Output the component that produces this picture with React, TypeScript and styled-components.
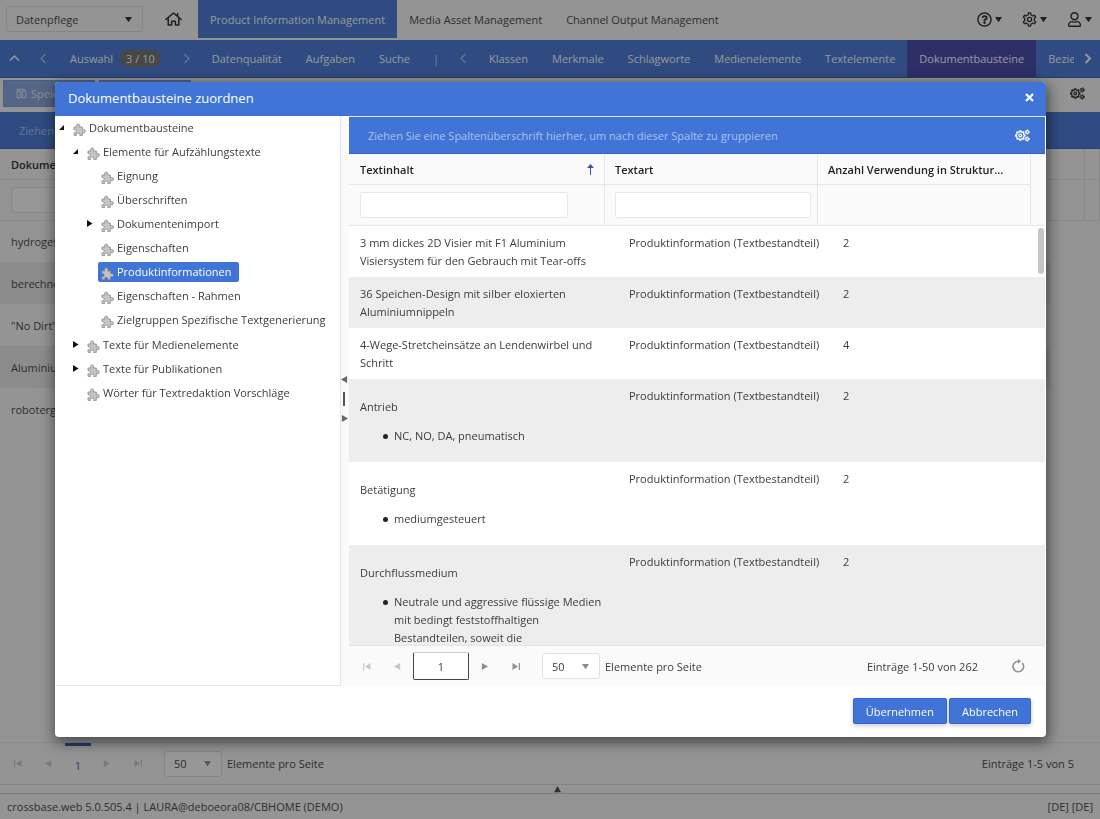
import React from "react";
import styled, { createGlobalStyle, css } from "styled-components";
import { FaRegUser, FaRegQuestionCircle, FaRegSave } from "react-icons/fa";

const blue = "#4074d6";
const line = "#e6e6e6";

const GlobalStyle = createGlobalStyle`
  * { box-sizing: border-box; }
  body { margin: 0; background: #fafafa; }
  body, button, input, select { font-family: "Open Sans", "Noto Sans", sans-serif; font-size: 11px; color: #3c3c3c; }
  button { border: 0; padding: 0; background: none; cursor: pointer; }
  a { color: inherit; text-decoration: none; }
  ul { list-style: none; margin: 0; padding: 0; }
  svg { flex: none; }
`;

/* ---------- icons ---------- */

const gearPath = (cx: number, cy: number, inner: number, outer: number, teeth: number) => {
  const step = (Math.PI * 2) / teeth;
  const at = (angle: number, radius: number) =>
    `${(cx + Math.cos(angle) * radius).toFixed(2)} ${(cy + Math.sin(angle) * radius).toFixed(2)}`;
  const points: string[] = [];
  for (let i = 0; i < teeth; i++) {
    const a = i * step - Math.PI / 2;
    points.push(at(a - step * 0.25, inner), at(a - step * 0.17, outer), at(a + step * 0.17, outer), at(a + step * 0.25, inner));
  }
  return `M${points.join("L")}Z`;
};

const GearIcon = () => (
  <svg width="15" height="15" viewBox="0 0 16 16" fill="none" stroke="currentColor" strokeWidth="1.4" strokeLinejoin="round">
    <path d={gearPath(8, 8, 5.3, 7.1, 6)} />
    <circle cx="8" cy="8" r="2.2" />
  </svg>
);

const GearsIcon = () => (
  <svg width="15" height="13" viewBox="0 0 15 13" fill="none" stroke="currentColor" strokeWidth="1.2" strokeLinejoin="round">
    <path d={gearPath(5.3, 6.5, 3.7, 4.7, 8)} />
    <circle cx="5.3" cy="6.5" r="1.4" />
    <circle cx="12.2" cy="3" r="1.4" />
    <circle cx="12.2" cy="10" r="1.4" />
    <circle cx="12.2" cy="3" r="2.3" strokeWidth="0.8" strokeDasharray="1.2 1.2" />
    <circle cx="12.2" cy="10" r="2.3" strokeWidth="0.8" strokeDasharray="1.2 1.2" />
  </svg>
);

const HomeIcon = () => (
  <svg width="17" height="14" viewBox="0 0 17 14" fill="none" stroke="currentColor" strokeWidth="1.5" strokeLinejoin="round" strokeLinecap="round">
    <path d="M1 7.4 8.5 1 16 7.4M12.6 4.2V1.6" />
    <path d="M3.2 6.6V13h3.4V9.2h3.8V13h3.4V6.6" />
  </svg>
);

const PuzzleIcon = () => (
  <svg width="13" height="13" viewBox="0 0 13 13" fill="#c4c4c4" stroke="#8e8e8e" strokeWidth="0.8" strokeLinejoin="round">
    <path d="M1 4h3C3.300 3.200 3.300 1 5.200 1s1.900 2.200 1.200 3H9.400v3c.7-.7 3-.7 3 1.200s-2.300 1.800-3 1.100V12.400H6.700c.5-1.200.1-2.200-1.500-2.200s-2 1-1.500 2.200H1V9.700c1.200.4 2.100 0 2.100-1.500S2.200 6.300 1 6.800z" />
  </svg>
);

type Direction = "up" | "down" | "left" | "right";

const triangles: Record<Direction, string> = {
  up: "0,7 8,7 4,0",
  down: "0,1 8,1 4,7",
  left: "7,0 7,8 0,4",
  right: "1,0 1,8 8,4",
};

const Triangle = ({ to, size = 7 }: { to: Direction; size?: number }) => (
  <svg width={size} height={size} viewBox="0 0 8 8" fill="currentColor">
    <polygon points={triangles[to]} />
  </svg>
);

const EndTriangle = ({ to }: { to: "left" | "right" }) => (
  <svg width="8" height="7" viewBox="0 0 8 7" fill="currentColor">
    {to === "left" ? <path d="M0 0h1.2v7H0zM7.5 0v7L2 3.500z" /> : <path d="M6.800 0H8v7H6.800zM.5 0v7L6 3.500z" />}
  </svg>
);

const chevrons: Record<string, string> = {
  up: "M1 7.500 5.500 3l4.500 4.500",
  left: "M7.500 1 3 5.500 7.500 10",
  right: "M3.500 1 8 5.500 3.500 10",
};

const Chevron = ({ to, weight = 1.5 }: { to: "up" | "left" | "right"; weight?: number }) => (
  <svg width="11" height="11" viewBox="0 0 11 11" fill="none" stroke="currentColor" strokeWidth={weight}>
    <path d={chevrons[to]} />
  </svg>
);

const ExpandedMark = () => (
  <svg width="6" height="6" viewBox="0 0 6 6" fill="#111">
    <polygon points="5,0 5,5 0,5" />
  </svg>
);

const CollapsedMark = () => (
  <svg width="6" height="8" viewBox="0 0 6 8" fill="#111">
    <polygon points="0,0 0,7 5.500,3.500" />
  </svg>
);

/* ---------- application page ---------- */

const Page = styled.div`
  display: flex;
  flex-direction: column;
  min-height: 100vh;
  background: #fafafa;
`;

const TopBar = styled.header`
  display: flex;
  align-items: center;
  height: 40px;
  padding: 0 8px 2px 6px;
`;

const SelectBox = styled.span<{ $width: number }>`
  display: inline-flex;
  align-items: center;
  position: relative;
  width: ${(p) => p.$width}px;
  height: 26px;
  border: 1px solid #e0e0e0;
  border-radius: 3px;
  background: ${(p) => (p.$width > 100 ? "#fafafa" : "#fff")};
  color: ${(p) => (p.$width > 100 ? "#222" : "#8a8a8a")};
  svg {
    position: absolute;
    right: 10px;
    pointer-events: none;
  }
`;

const Select = styled.select`
  appearance: none;
  width: 100%;
  height: 100%;
  border: 0;
  padding: 0 20px 0 9px;
  background: transparent;
`;

const HomeLink = styled.a`
  display: flex;
  margin: 0 16px 0 22px;
  color: #222;
`;

const ModuleTabs = styled.nav`
  display: flex;
  align-self: flex-start;
  flex: 1;
  min-width: 0;
`;

const ModuleTab = styled.a<{ $active?: boolean }>`
  display: flex;
  align-items: center;
  height: 38px;
  padding: 0 12px;
  white-space: nowrap;
  ${(p) => p.$active && css`background: ${blue}; color: #fff;`}
`;

const UserTools = styled.div`
  display: flex;
  gap: 20px;
`;

const ToolButton = styled.button`
  display: flex;
  align-items: center;
  gap: 3px;
  color: #222;
`;

const SectionBar = styled.nav`
  display: flex;
  align-items: stretch;
  height: 38px;
  background: ${blue};
  color: #fff;
  border-bottom: 1px solid #3058a8;
`;

const ArrowButton = styled.button<{ $dim?: boolean; $width: number }>`
  display: flex;
  flex: none;
  align-items: center;
  justify-content: center;
  width: ${(p) => p.$width}px;
  color: ${(p) => (p.$dim ? "#9bb6ea" : "#fff")};
`;

const SectionTabs = styled.div`
  display: flex;
  flex: 1;
  min-width: 0;
  overflow: hidden;
`;

const SectionTab = styled.a<{ $active?: boolean }>`
  display: flex;
  flex: none;
  align-items: center;
  gap: 7px;
  padding: 0 12px;
  background: ${(p) => (p.$active ? "#3f3fa8" : "transparent")};
`;

const Badge = styled.span`
  padding: 0 6px;
  border-radius: 9px;
  background: #6b6b6b;
  line-height: 17px;
`;

const Divider = styled.span`
  align-self: center;
  padding: 0 12px 0 11px;
  color: #b9e4e8;
`;

const ActionBar = styled.div`
  display: flex;
  align-items: center;
  gap: 4px;
  height: 34px;
  padding: 0 15px 4px 3px;
`;

const DisabledButton = styled.button`
  display: flex;
  align-items: center;
  gap: 4px;
  width: 92px;
  height: 27px;
  padding: 0 12px;
  border: 1px solid #7596da;
  background: #84a3e0;
  color: #e8eefb;
  cursor: default;
`;

const Spacer = styled.span`
  flex: 1;
`;

const GroupBar = styled.div<{ $inset: number }>`
  display: flex;
  align-items: center;
  justify-content: space-between;
  flex: none;
  height: 37px;
  padding: 0 15px 0 ${(p) => p.$inset}px;
  background: ${blue};
  border-bottom: 1px solid #2f62c6;
  color: #a9c2f0;
  button { color: #fff; }
`;

const PageGrid = styled.table`
  width: 100%;
  border-collapse: collapse;
  table-layout: fixed;
  th { height: 30px; padding: 2px 11px 0; text-align: left; font-weight: 600; color: #222; border-bottom: 1px solid ${line}; border-right: 1px solid ${line}; }
  thead tr:last-child th { height: 41px; padding-top: 0; }
  td { height: 42px; padding: 0 11px; white-space: nowrap; overflow: hidden; }
  tbody tr:nth-child(even) td:first-child { background: #ebebeb; }
  col:last-child { width: 15px; }
  col:nth-child(2) { width: 35px; }
`;

const TextInput = styled.input`
  display: block;
  width: 100%;
  height: 26px;
  padding: 0 8px;
  border: 1px solid #e8e8e8;
  border-radius: 2px;
  background: #fff;
`;

const PageBody = styled.main`
  flex: 1;
`;

const Pager = styled.div<{ $height: number }>`
  display: flex;
  flex: none;
  align-items: center;
  height: ${(p) => p.$height}px;
  padding-left: 2px;
  border-top: 1px solid ${line};
  background: #fafafa;
`;

const PagerButton = styled.button<{ $dim?: boolean }>`
  display: flex;
  align-items: center;
  justify-content: center;
  width: 31px;
  height: 26px;
  color: ${(p) => (p.$dim ? "#c8c8c8" : "#8f8f8f")};
`;

const CurrentPage = styled.button`
  align-self: stretch;
  width: 26px;
  margin: 0 0 0 1px;
  border-top: 3px solid #3f51b5;
  color: #3f51b5;
`;

const PagerLabel = styled.label`
  display: flex;
  align-items: center;
  gap: 5px;
  margin-left: 11px;
`;

const PagerInfo = styled.span<{ $right: number }>`
  margin-left: auto;
  padding-right: ${(p) => p.$right}px;
`;

const BottomSplitter = styled.div`
  display: flex;
  align-items: center;
  justify-content: center;
  height: 10px;
  padding-left: 14px;
  border-top: 1px solid #ddd;
  border-bottom: 1px solid #d0d0d0;
  color: #444;
`;

const StatusBar = styled.footer`
  display: flex;
  align-items: center;
  justify-content: space-between;
  height: 25px;
  padding: 0 7px;
`;

/* ---------- dialog ---------- */

const Overlay = styled.div`
  position: fixed;
  inset: 0;
  display: flex;
  padding: 82px 54px 82px 55px;
  background: rgba(28, 28, 28, 0.46);
`;

const Dialog = styled.section`
  display: flex;
  flex: 1;
  flex-direction: column;
  min-width: 0;
  overflow: hidden;
  border-radius: 4px;
  background: #fff;
  box-shadow: 1px 4px 14px 2px rgba(0, 0, 0, 0.5);
`;

const DialogTitle = styled.header`
  display: flex;
  flex: none;
  align-items: center;
  justify-content: space-between;
  height: 34px;
  padding: 0 12px 3px 13px;
  background: ${blue};
  color: #fff;
  h1 { margin: 0; font-size: 13px; font-weight: 400; }
  button { display: flex; color: #fff; }
`;

const DialogBody = styled.div`
  display: flex;
  flex: 1;
  min-height: 0;
  padding: 0 1px;
`;

const TreePane = styled.div`
  flex: none;
  width: 285px;
  border-right: 1px solid ${line};
  border-bottom: 1px solid ${line};
  overflow: hidden;
`;

const TreeGroup = styled.ul`
  && > li > ul > li > ul { padding: 0 0 1px; }
`;

const TreeRow = styled.div<{ $level: number }>`
  display: flex;
  align-items: center;
  height: 24px;
  padding-left: ${(p) => p.$level * 14 + 3}px;
`;

const TreeMark = styled.span`
  display: flex;
  flex: none;
  width: 11px;
  padding-bottom: 1px;
`;

const TreeLabel = styled.button<{ $selected?: boolean }>`
  display: flex;
  align-items: center;
  gap: 3px;
  height: 20px;
  padding: 0 7px 1px 3px;
  border-radius: 2px;
  white-space: nowrap;
  color: ${(p) => (p.$selected ? "#fff" : "#3c3c3c")};
  background: ${(p) => (p.$selected ? blue : "transparent")};
  svg { margin-top: 3px; }
`;

const PaneSplitter = styled.div`
  display: flex;
  flex: none;
  flex-direction: column;
  align-items: center;
  justify-content: center;
  gap: 9px;
  width: 8px;
  padding: 0 2px 4px 0;
  background: #fafafa;
  color: #666;
`;

const SplitterGrip = styled.span`
  width: 2px;
  height: 14px;
  background: #555;
`;

const GridPane = styled.div`
  display: flex;
  flex: 1;
  flex-direction: column;
  min-width: 0;
  border-top: 1px solid #dfe8f8;
`;

const HeadTable = styled.table`
  flex: none;
  width: 100%;
  border-collapse: separate;
  border-spacing: 0;
  table-layout: fixed;
  background: #fafafa;
  col:nth-child(2), col:nth-child(3) { width: 213px; }
  col:last-child { width: 14px; }
  th, td { padding: 0 6px 0 10px; text-align: left; border-bottom: 1px solid ${line}; border-right: 1px solid ${line}; }
  th { height: 31px; padding-top: 1px; font-weight: 600; color: #222; white-space: nowrap; }
  th:first-child, td:first-child { padding-left: 11px; }
  td { height: 41px; }
  tr > :last-child { border-right: 0; padding: 0; }
  thead tr > :last-child { border-bottom: 0; }
`;

const SortHead = styled.span`
  display: flex;
  align-items: center;
  justify-content: space-between;
  padding-right: 4px;
`;

const FilterCell = styled.div<{ $end: number }>`
  padding-right: ${(p) => p.$end}px;
`;

const GridBody = styled.div`
  position: relative;
  flex: 1;
  min-height: 0;
  overflow: hidden;
`;

const ScrollThumb = styled.span`
  position: absolute;
  top: 2px;
  right: 1px;
  width: 6px;
  height: 46px;
  border-radius: 3px;
  background: #c6c6c6;
`;

const BodyTable = styled.table`
  width: 100%;
  border-collapse: separate;
  border-spacing: 0;
  table-layout: fixed;
  line-height: 18px;
  col:nth-child(2), col:nth-child(3) { width: 214px; }
  td { padding: 8px 12px 7px; vertical-align: top; }
  td:first-child { padding-left: 11px; }
  td:nth-child(2) { white-space: nowrap; }
  tr:nth-child(even) { background: #ededed; }
  p { margin: 11px 0; }
  ul { margin: 11px 0 10px; padding-left: 23px; }
  li { display: flex; gap: 6px; }
  li::before { content: ""; flex: none; width: 5px; height: 5px; margin-top: 7px; border-radius: 50%; background: #222; }
`;

const PageInput = styled.input`
  width: 56px;
  height: 28px;
  border: 1px solid #444;
  border-top-color: #ccc;
  border-radius: 2px;
  background: #fff;
  text-align: center;
`;

const RefreshButton = styled.button`
  display: flex;
  margin-right: 20px;
  color: #8f8f8f;
`;

const DialogFooter = styled.footer`
  display: flex;
  flex: none;
  justify-content: flex-end;
  gap: 2px;
  height: 51px;
  padding: 12px 15px 0;
`;

const PrimaryButton = styled.button`
  height: 26px;
  padding: 0 12px;
  border: 1px solid #2f66d0;
  border-radius: 2px;
  background: ${blue};
  color: #fff;
  box-shadow: 0 2px 4px rgba(0, 0, 0, 0.2);
`;

type Node = { name: string; open?: boolean; closed?: boolean; selected?: boolean; children?: Node[] };

const tree: Node[] = [
  {
    name: "Dokumentbausteine",
    open: true,
    children: [
      {
        name: "Elemente für Aufzählungstexte",
        open: true,
        children: [
          { name: "Eignung" },
          { name: "Überschriften" },
          { name: "Dokumentenimport", closed: true },
          { name: "Eigenschaften" },
          { name: "Produktinformationen", selected: true },
          { name: "Eigenschaften - Rahmen" },
          { name: "Zielgruppen Spezifische Textgenerierung" },
        ],
      },
      { name: "Texte für Medienelemente", closed: true },
      { name: "Texte für Publikationen", closed: true },
      { name: "Wörter für Textredaktion Vorschläge" },
    ],
  },
];

const TreeNode = ({ node, level }: { node: Node; level: number }) => (
  <li>
    <TreeRow $level={level}>
      <TreeMark>
        {node.open && <ExpandedMark />}
        {node.closed && <CollapsedMark />}
      </TreeMark>
      <TreeLabel $selected={node.selected}>
        <PuzzleIcon />
        {node.name}
      </TreeLabel>
    </TreeRow>
    {node.children && (
      <ul>
        {node.children.map((child) => (
          <TreeNode key={child.name} node={child} level={level + 1} />
        ))}
      </ul>
    )}
  </li>
);

type Entry = { text: string; item?: string; count: number };

const entries: Entry[] = [
  { text: "3 mm dickes 2D Visier mit F1 Aluminium Visiersystem für den Gebrauch mit Tear-offs", count: 2 },
  { text: "36 Speichen-Design mit silber eloxierten Aluminiumnippeln", count: 2 },
  { text: "4-Wege-Stretcheinsätze an Lendenwirbel und Schritt", count: 4 },
  { text: "Antrieb", item: "NC, NO, DA, pneumatisch", count: 2 },
  { text: "Betätigung", item: "mediumgesteuert", count: 2 },
  {
    text: "Durchflussmedium",
    item: "Neutrale und aggressive flüssige Medien mit bedingt feststoffhaltigen Bestandteilen, soweit die",
    count: 2,
  },
];

const pageRows = ["hydrogef", "berechne", "\"No Dirt\"", "Aluminiu", "roboterg"];

const PageSize = ({ id }: { id: string }) => (
  <PagerLabel htmlFor={id}>
    <SelectBox $width={58}>
      <Select id={id} defaultValue="50">
        <option>50</option>
      </Select>
      <Triangle to="down" />
    </SelectBox>
    Elemente pro Seite
  </PagerLabel>
);

const groupHint = "Ziehen Sie eine Spaltenüberschrift hierher, um nach dieser Spalte zu gruppieren";

export default function App() {
  return (
    <>
      <GlobalStyle />
      <Page>
        <TopBar>
          <SelectBox $width={137}>
            <Select aria-label="Bereich" defaultValue="Datenpflege">
              <option>Datenpflege</option>
            </Select>
            <Triangle to="down" />
          </SelectBox>
          <HomeLink href="#" aria-label="Startseite"><HomeIcon /></HomeLink>
          <ModuleTabs>
            <ModuleTab href="#" $active>Product Information Management</ModuleTab>
            <ModuleTab href="#">Media Asset Management</ModuleTab>
            <ModuleTab href="#">Channel Output Management</ModuleTab>
          </ModuleTabs>
          <UserTools>
            <ToolButton aria-label="Hilfe"><FaRegQuestionCircle size={15} /><Triangle to="down" /></ToolButton>
            <ToolButton aria-label="Einstellungen"><GearIcon /><Triangle to="down" /></ToolButton>
            <ToolButton aria-label="Benutzer"><FaRegUser size={15} /><Triangle to="down" /></ToolButton>
          </UserTools>
        </TopBar>
        <SectionBar>
          <ArrowButton $width={29} aria-label="Einklappen"><Chevron to="up" /></ArrowButton>
          <ArrowButton $width={29} $dim aria-label="Vorheriger"><Chevron to="left" /></ArrowButton>
          <SectionTab href="#">Auswahl <Badge>3 / 10</Badge></SectionTab>
          <ArrowButton $width={27} $dim aria-label="Nächster"><Chevron to="right" /></ArrowButton>
          <SectionTab href="#">Datenqualität</SectionTab>
          <SectionTab href="#">Aufgaben</SectionTab>
          <SectionTab href="#">Suche</SectionTab>
          <Divider>|</Divider>
          <ArrowButton $width={26} $dim aria-label="Zurück"><Chevron to="left" /></ArrowButton>
          <SectionTabs>
            <SectionTab href="#">Klassen</SectionTab>
            <SectionTab href="#">Merkmale</SectionTab>
            <SectionTab href="#">Schlagworte</SectionTab>
            <SectionTab href="#">Medienelemente</SectionTab>
            <SectionTab href="#">Textelemente</SectionTab>
            <SectionTab href="#" $active>Dokumentbausteine</SectionTab>
            <SectionTab href="#">Beziehungen</SectionTab>
          </SectionTabs>
          <ArrowButton $width={26} aria-label="Weiter"><Chevron to="right" weight={2} /></ArrowButton>
        </SectionBar>
        <ActionBar>
          <DisabledButton disabled><FaRegSave size={11} />Speichern</DisabledButton>
          <DisabledButton disabled aria-label="Verwerfen" />
          <Spacer />
          <ToolButton aria-label="Spalten"><GearsIcon /></ToolButton>
        </ActionBar>
        <GroupBar $inset={19}>{groupHint}</GroupBar>
        <PageGrid>
          <colgroup><col /><col /><col /></colgroup>
          <thead>
            <tr><th>Dokumentbaustein</th><th /><th /></tr>
            <tr><th><TextInput aria-label="Dokumentbaustein filtern" /></th><th /><th /></tr>
          </thead>
          <tbody>
            {pageRows.map((row) => (
              <tr key={row}><td>{row}</td><td /><td /></tr>
            ))}
          </tbody>
        </PageGrid>
        <PageBody />
        <Pager $height={42}>
          <PagerButton $dim aria-label="Erste Seite"><EndTriangle to="left" /></PagerButton>
          <PagerButton $dim aria-label="Vorherige Seite"><Triangle to="left" /></PagerButton>
          <CurrentPage>1</CurrentPage>
          <PagerButton $dim aria-label="Nächste Seite"><Triangle to="right" /></PagerButton>
          <PagerButton $dim aria-label="Letzte Seite"><EndTriangle to="right" /></PagerButton>
          <PageSize id="page-size" />
          <PagerInfo $right={26}>Einträge 1-5 von 5</PagerInfo>
        </Pager>
        <BottomSplitter><Triangle to="up" /></BottomSplitter>
        <StatusBar>
          <span>crossbase.web 5.0.505.4 | LAURA@deboeora08/CBHOME (DEMO)</span>
          <span>[DE] [DE]</span>
        </StatusBar>
      </Page>

      <Overlay>
        <Dialog role="dialog" aria-labelledby="dialog-title">
          <DialogTitle>
            <h1 id="dialog-title">Dokumentbausteine zuordnen</h1>
            <button aria-label="Schließen">
              <svg width="9" height="9" viewBox="0 0 9 9" stroke="currentColor" strokeWidth="2.2"><path d="M1 1l7 7M8 1L1 8" /></svg>
            </button>
          </DialogTitle>
          <DialogBody>
            <TreePane>
              <TreeGroup>
                {tree.map((node) => <TreeNode key={node.name} node={node} level={0} />)}
              </TreeGroup>
            </TreePane>
            <PaneSplitter>
              <Triangle to="left" />
              <SplitterGrip />
              <Triangle to="right" />
            </PaneSplitter>
            <GridPane>
              <GroupBar $inset={19}>
                {groupHint}
                <ToolButton aria-label="Spalten"><GearsIcon /></ToolButton>
              </GroupBar>
              <HeadTable>
                <colgroup><col /><col /><col /><col /></colgroup>
                <thead>
                  <tr>
                    <th>
                      <SortHead>
                        Textinhalt
                        <svg width="7" height="11" viewBox="0 0 7 11" fill="#3f51b5"><path d="M3.500 0 7 4H4v7H3V4H0z" /></svg>
                      </SortHead>
                    </th>
                    <th>Textart</th>
                    <th>Anzahl Verwendung in Struktur...</th>
                    <th />
                  </tr>
                </thead>
                <tbody>
                  <tr>
                    <td><FilterCell $end={30}><TextInput aria-label="Textinhalt filtern" /></FilterCell></td>
                    <td><FilterCell $end={0}><TextInput aria-label="Textart filtern" /></FilterCell></td>
                    <td />
                    <td />
                  </tr>
                </tbody>
              </HeadTable>
              <GridBody>
                <BodyTable>
                  <colgroup><col /><col /><col /></colgroup>
                  <tbody>
                    {entries.map((entry) => (
                      <tr key={entry.text}>
                        <td>
                          {entry.item ? (
                            <>
                              <p>{entry.text}</p>
                              <ul><li>{entry.item}</li></ul>
                            </>
                          ) : (
                            entry.text
                          )}
                        </td>
                        <td>Produktinformation (Textbestandteil)</td>
                        <td>{entry.count}</td>
                      </tr>
                    ))}
                  </tbody>
                </BodyTable>
                <ScrollThumb />
              </GridBody>
              <Pager $height={41}>
                <PagerButton $dim aria-label="Erste Seite"><EndTriangle to="left" /></PagerButton>
                <PagerButton $dim aria-label="Vorherige Seite"><Triangle to="left" /></PagerButton>
                <PageInput aria-label="Seite" defaultValue="1" />
                <PagerButton aria-label="Nächste Seite"><Triangle to="right" /></PagerButton>
                <PagerButton aria-label="Letzte Seite"><EndTriangle to="right" /></PagerButton>
                <PageSize id="dialog-page-size" />
                <PagerInfo $right={33}>Einträge 1-50 von 262</PagerInfo>
                <RefreshButton aria-label="Aktualisieren">
                  <svg width="14" height="14" viewBox="0 0 14 14" fill="none" stroke="currentColor" strokeWidth="1.6">
                    <path d="M11.300 4A5.300 5.300 0 1 1 7 2.200h1.500" />
                    <path d="M7 0l3.200 2.200L7 4.500z" fill="currentColor" stroke="none" />
                  </svg>
                </RefreshButton>
              </Pager>
            </GridPane>
          </DialogBody>
          <DialogFooter>
            <PrimaryButton>Übernehmen</PrimaryButton>
            <PrimaryButton>Abbrechen</PrimaryButton>
          </DialogFooter>
        </Dialog>
      </Overlay>
    </>
  );
}
